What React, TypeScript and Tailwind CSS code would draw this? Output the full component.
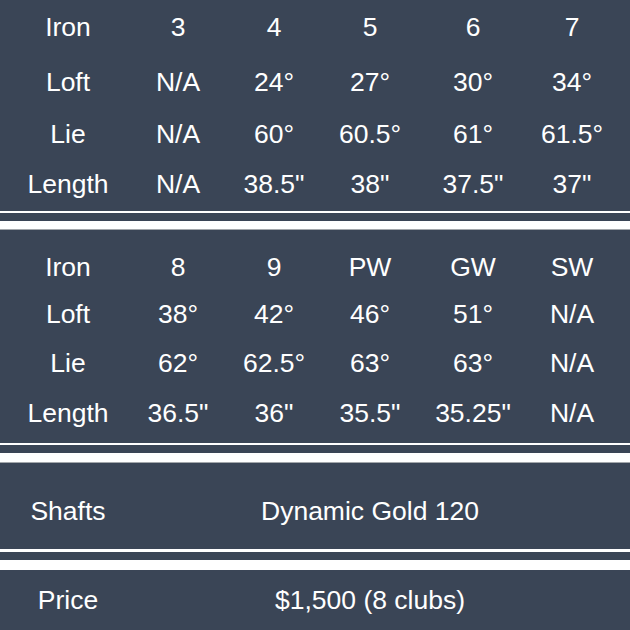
// App.tsx
const ironTables = [
  {
    rows: [
      { label: "Iron", values: ["3", "4", "5", "6", "7"], h: "h-[55px]" },
      { label: "Loft", values: ["N/A", "24°", "27°", "30°", "34°"], h: "h-[55px]" },
      { label: "Lie", values: ["N/A", "60°", "60.5°", "61°", "61.5°"], h: "h-[49px]" },
      { label: "Length", values: ["N/A", '38.5"', '38"', '37.5"', '37"'], h: "h-[50px]" },
    ],
    pad: "pt-0 pb-[2px]",
  },
  {
    rows: [
      { label: "Iron", values: ["8", "9", "PW", "GW", "SW"], h: "h-[46px]" },
      { label: "Loft", values: ["38°", "42°", "46°", "51°", "N/A"], h: "h-[48px]" },
      { label: "Lie", values: ["62°", "62.5°", "63°", "63°", "N/A"], h: "h-[50px]" },
      { label: "Length", values: ['36.5"', '36"', '35.5"', '35.25"', "N/A"], h: "h-[50px]" },
    ],
    pad: "pt-[14px] pb-[5px]",
  },
];

// 행 하나: 라벨 + 5개 값
const IronRow = ({ label, values, h }: { label: string; values: string[]; h: string }) => (
  <div className={`grid grid-cols-[136px_84px_108px_84px_122px_76px_1fr] items-center ${h}`}>
    <div className="text-center">{label}</div>
    {values.map((v, i) => (
      <div key={i} className="text-center whitespace-nowrap">
        {v}
      </div>
    ))}
    <div />
  </div>
);

// 테이블 사이 흰 구분선
const Divider = ({ thin, thick, grey }: { thin: string; thick: string; grey?: boolean }) => (
  <div className="flex flex-col">
    <div className={`bg-white ${thin}`} />
    <div className="h-[8px] bg-[#3a4556]" />
    <div className={`bg-white ${thick}`} />
    {grey && <div className="h-[1px] bg-[#a3a7ab]" />}
  </div>
);

const InfoRow = ({ label, value, h }: { label: string; value: string; h: string }) => (
  <div className={`grid grid-cols-[136px_468px_1fr] items-center ${h}`}>
    <div className="text-center">{label}</div>
    <div className="text-center whitespace-nowrap">{value}</div>
    <div />
  </div>
);

export default function App() {
  return (
    <div
      className="w-[630px] h-[630px] overflow-hidden bg-[#3a4556] text-white text-[26.5px] leading-none"
      style={{ fontFamily: '"Liberation Sans", Arial, sans-serif' }}
    >
      <div className={ironTables[0].pad}>
        {ironTables[0].rows.map((r) => (
          <IronRow key={r.label} {...r} />
        ))}
      </div>
      <Divider thin="h-[2px]" thick="h-[8px]" grey />
      <div className={ironTables[1].pad}>
        {ironTables[1].rows.map((r) => (
          <IronRow key={r.label} {...r} />
        ))}
      </div>
      <Divider thin="h-[2px]" thick="h-[9px]" grey />
      <div className="pt-[10px]">
        <InfoRow label="Shafts" value="Dynamic Gold 120" h="h-[76px]" />
      </div>
      <Divider thin="h-[3px]" thick="h-[10px]" />
      <InfoRow label="Price" value="$1,500 (8 clubs)" h="h-[60px]" />
    </div>
  );
}
